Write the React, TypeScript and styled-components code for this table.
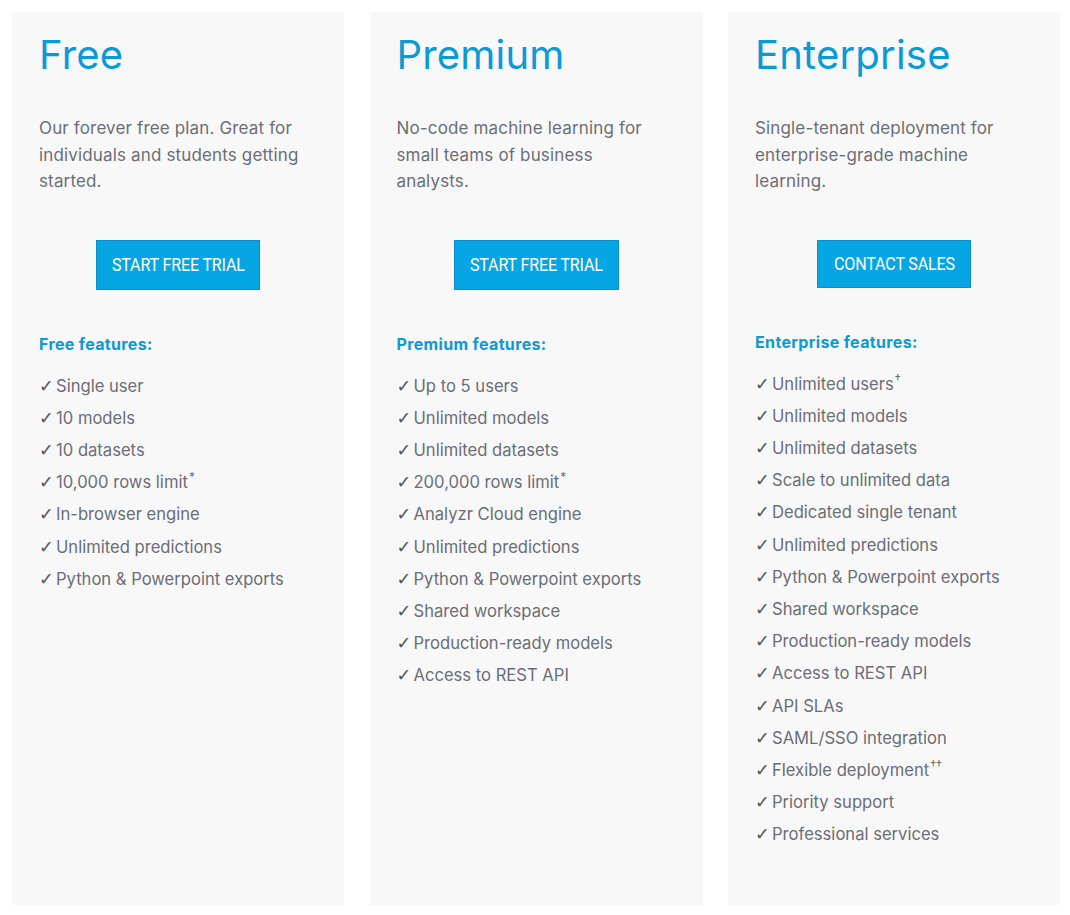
import React from "react";
import styled, { createGlobalStyle } from "styled-components";

const Global = createGlobalStyle`
  html, body { margin: 0; padding: 0; background: #ffffff; }
  body { font-family: "Inter", "Noto Sans", sans-serif; }
  * { box-sizing: border-box; }
`;

const Page = styled.div`
  display: grid;
  grid-template-columns: 332px 333px 332px;
  column-gap: 25.5px;
  padding: 12px 10px 10px 12px;
  width: 1070px;
`;

const Card = styled.section`
  background: #f8f8f8;
  height: 893px;
  padding: 26px 27px 0 27px;
  display: flex;
  flex-direction: column;
`;

const Title = styled.h2`
  margin: 0;
  font-family: "Inter", sans-serif;
  font-weight: 400;
  font-size: 40px;
  line-height: 34px;
  color: #0a9ad6;
  letter-spacing: 0.2px;
`;

const Desc = styled.p`
  margin: 43px 0 0 0;
  max-width: 266px;
  font-size: 17px;
  letter-spacing: 0.15px;
  line-height: 26.5px;
  color: #6b6e76;
  font-weight: 400;
`;

const ButtonRow = styled.div`
  display: flex;
  justify-content: center;
  margin-top: 45px;
`;

const Button = styled.button<{ $w: number; $h: number }>`
  width: ${(p) => p.$w}px;
  height: ${(p) => p.$h}px;
  background: #06a5e3;
  border: 1px solid #0a8fc8;
  color: #ffffff;
  font-family: "Roboto", sans-serif;
  font-weight: 400;
  padding: 0;
  cursor: pointer;
  display: flex;
  align-items: center;
  justify-content: center;
  overflow: hidden;
`;

const ButtonLabel = styled.span`
  display: inline-block;
  font-size: 18.5px;
  letter-spacing: -0.2px;
  white-space: nowrap;
  transform: scaleX(0.87);
`;

const FeatureHead = styled.h3<{ $top: number }>`
  margin: ${(p) => p.$top}px 0 0 0;
  font-size: 16px;
  letter-spacing: 0.35px;
  font-weight: 700;
  color: #0a9ad6;
  line-height: 20px;
`;

const List = styled.ul`
  list-style: none;
  margin: 16px 0 0 0;
  padding: 0;
`;

const Item = styled.li`
  font-size: 16.6px;
  line-height: 32.2px;
  color: #6b6e76;
  display: flex;
  align-items: baseline;
`;

const Check = styled.span`
  font-family: "DejaVu Sans", sans-serif;
  font-size: 17.5px;
  line-height: 1;
  color: #55585f;
  width: 17px;
  flex: none;
`;

const Sup = styled.sup`
  font-size: 12px;
  line-height: 0;
  vertical-align: 7px;
  margin-left: 1px;
`;

type Feature = { text: string; sup?: string };
type Plan = {
  name: string;
  desc: string;
  cta: string;
  btnW: number;
  btnH: number;
  headTop: number;
  head: string;
  features: Feature[];
};

const plans: Plan[] = [
  {
    name: "Free",
    desc: "Our forever free plan. Great for individuals and students getting started.",
    cta: "START FREE TRIAL",
    btnW: 164,
    btnH: 50,
    headTop: 44,
    head: "Free features:",
    features: [
      { text: "Single user" },
      { text: "10 models" },
      { text: "10 datasets" },
      { text: "10,000 rows limit", sup: "*" },
      { text: "In-browser engine" },
      { text: "Unlimited predictions" },
      { text: "Python & Powerpoint exports" },
    ],
  },
  {
    name: "Premium",
    desc: "No-code machine learning for small teams of business analysts.",
    cta: "START FREE TRIAL",
    btnW: 165,
    btnH: 50,
    headTop: 44,
    head: "Premium features:",
    features: [
      { text: "Up to 5 users" },
      { text: "Unlimited models" },
      { text: "Unlimited datasets" },
      { text: "200,000 rows limit", sup: "*" },
      { text: "Analyzr Cloud engine" },
      { text: "Unlimited predictions" },
      { text: "Python & Powerpoint exports" },
      { text: "Shared workspace" },
      { text: "Production-ready models" },
      { text: "Access to REST API" },
    ],
  },
  {
    name: "Enterprise",
    desc: "Single-tenant deployment for enterprise-grade machine learning.",
    cta: "CONTACT SALES",
    btnW: 154,
    btnH: 48,
    headTop: 44,
    head: "Enterprise features:",
    features: [
      { text: "Unlimited users", sup: "†" },
      { text: "Unlimited models" },
      { text: "Unlimited datasets" },
      { text: "Scale to unlimited data" },
      { text: "Dedicated single tenant" },
      { text: "Unlimited predictions" },
      { text: "Python & Powerpoint exports" },
      { text: "Shared workspace" },
      { text: "Production-ready models" },
      { text: "Access to REST API" },
      { text: "API SLAs" },
      { text: "SAML/SSO integration" },
      { text: "Flexible deployment", sup: "††" },
      { text: "Priority support" },
      { text: "Professional services" },
    ],
  },
];

export default function App() {
  return (
    <>
      <Global />
      <Page>
        {plans.map((p) => (
          <Card key={p.name}>
            <Title>{p.name}</Title>
            <Desc>{p.desc}</Desc>
            <ButtonRow>
              <Button $w={p.btnW} $h={p.btnH}>
                <ButtonLabel>{p.cta}</ButtonLabel>
              </Button>
            </ButtonRow>
            <FeatureHead $top={p.headTop}>{p.head}</FeatureHead>
            <List>
              {p.features.map((f) => (
                <Item key={f.text}>
                  <Check>✓</Check>
                  <span>
                    {f.text}
                    {f.sup && <Sup>{f.sup}</Sup>}
                  </span>
                </Item>
              ))}
            </List>
          </Card>
        ))}
      </Page>
    </>
  );
}
